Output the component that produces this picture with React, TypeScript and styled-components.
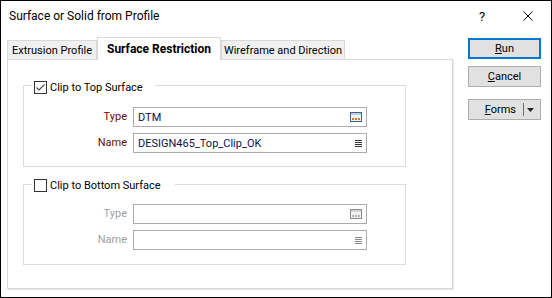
import React from 'react';
import styled, { createGlobalStyle } from 'styled-components';

const Global = createGlobalStyle`
  html, body { margin: 0; padding: 0; background: #ffffff; }
  body { font-family: Roboto, "Segoe UI", "Liberation Sans", Arial, sans-serif; }
  * { box-sizing: border-box; }
`;

const Window = styled.div`
  width: 552px;
  height: 298px;
  border: 1px solid #000000;
  background: #ffffff;
  display: flex;
  flex-direction: column;
  overflow: hidden;
`;

const TitleBar = styled.div`
  height: 30px;
  flex-shrink: 0;
  display: flex;
  align-items: center;
  padding-left: 8px;
`;

const Title = styled.div`
  flex: 1;
  font-size: 12px;
  color: #000000;
  white-space: nowrap;
`;

const CaptionButton = styled.div`
  width: 46px;
  height: 30px;
  display: flex;
  align-items: center;
  justify-content: center;
  font-size: 13px;
  color: #000000;
`;

const Body = styled.div`
  display: flex;
  gap: 15px;
  padding: 6px 0 0 6px;
`;

const TabArea = styled.div`
  width: 446px;
  display: flex;
  flex-direction: column;
`;

const TabStrip = styled.div`
  height: 22px;
  display: flex;
  align-items: flex-end;
`;

const Tab = styled.div<{ $active?: boolean; $w: number }>`
  width: ${p => p.$w}px;
  height: ${p => (p.$active ? 23 : 19)}px;
  margin-bottom: ${p => (p.$active ? -1 : 0)}px;
  position: relative;
  z-index: ${p => (p.$active ? 1 : 0)};
  border: 1px solid #d9d9d9;
  border-bottom: none;
  background: ${p => (p.$active ? '#ffffff' : '#f0f0f0')};
  font-size: ${p => (p.$active ? 12 : 11)}px;
  font-weight: ${p => (p.$active ? 700 : 400)};
  color: #000000;
  display: flex;
  align-items: center;
  justify-content: center;
  white-space: nowrap;
`;

const Panel = styled.div`
  height: 230px;
  border: 1px solid #d9d9d9;
  box-shadow: 1px 1px 0 #e6e6e6;
  background: #ffffff;
  padding: 18px 0 0 15px;
  display: flex;
  flex-direction: column;
`;

const Group = styled.fieldset<{ $pt: number; $pb: number }>`
  width: 383px;
  margin: 0;
  border: 1px solid #dcdcdc;
  padding: ${p => p.$pt}px 0 ${p => p.$pb}px 0;
  min-inline-size: auto;
  & + & {
    margin-top: 10px;
  }
`;

const Legend = styled.legend<{ $pr: number }>`
  margin-left: 8px;
  padding: 0 ${p => p.$pr}px 0 2px;
  height: 14px;
`;

const CheckLabel = styled.span`
  display: inline-flex;
  align-items: center;
  gap: 3px;
  height: 14px;
  font-size: 11px;
  color: #000000;
  white-space: nowrap;
`;

const CheckBox = styled.span`
  width: 13px;
  height: 13px;
  border: 1px solid #333333;
  background: #ffffff;
  display: inline-flex;
  align-items: center;
  justify-content: center;
`;

const Fields = styled.div`
  display: grid;
  grid-template-columns: 103px 234px;
  column-gap: 6px;
  row-gap: 6px;
`;

const FieldLabel = styled.div<{ $disabled?: boolean }>`
  text-align: right;
  font-size: 11px;
  line-height: 20px;
  color: ${p => (p.$disabled ? '#a0a0a0' : '#6a0a0a')};
`;

const Input = styled.div`
  height: 20px;
  border: 1px solid #ababab;
  background: #ffffff;
  display: flex;
  align-items: center;
  padding: 0 4px 0 4px;
  font-size: 11px;
  color: #101048;
`;

const InputText = styled.span`
  flex: 1;
  white-space: nowrap;
`;

const ButtonColumn = styled.div`
  width: 73px;
  display: flex;
  flex-direction: column;
  padding-top: 1px;
`;

const Button = styled.div<{ $default?: boolean; $mt?: number }>`
  height: 21px;
  margin-top: ${p => p.$mt ?? 0}px;
  border: ${p => (p.$default ? '2px solid #0078d7' : '1px solid #adadad')};
  background: #e1e1e1;
  font-size: 11px;
  color: #000000;
  display: flex;
  align-items: center;
  justify-content: center;
  white-space: nowrap;
`;

const SplitButton = styled(Button)`
  justify-content: flex-end;
  padding-right: 6px;
`;

const SplitDivider = styled.span`
  width: 1px;
  height: 13px;
  background: #6d6d6d;
  margin: 0 3px 0 7px;
`;

const CloseIcon = () => (
  <svg width="10" height="10" viewBox="0 0 10 10">
    <path d="M0.5 0.5 L9.5 9.5 M9.5 0.5 L0.5 9.5" stroke="#000" strokeWidth="1" fill="none" />
  </svg>
);

const CheckMark = () => (
  <svg width="11" height="11" viewBox="0 0 11 11">
    <polyline points="1.5,5.5 4,8 9.5,2.5" stroke="#4a4a4a" strokeWidth="1.1" fill="none" />
  </svg>
);

const BrowseIcon = ({ disabled }: { disabled?: boolean }) => {
  const edge = disabled ? '#8c8c8c' : '#41618a';
  const top = disabled ? '#d4d4d4' : '#bcd0e6';
  const fill = disabled ? '#f2f2f2' : '#eef3f9';
  const dot = disabled ? '#b4b4b4' : '#d07a2a';
  return (
    <svg width="12" height="10" viewBox="0 0 12 10">
      <rect x="0.5" y="0.5" width="11" height="9" fill={fill} stroke={edge} />
      <rect x="1" y="1" width="10" height="2" fill={top} />
      <rect x="2" y="6" width="2" height="2" fill={dot} />
      <rect x="5" y="6" width="2" height="2" fill={dot} />
      <rect x="8" y="6" width="2" height="2" fill={dot} />
    </svg>
  );
};

const MenuIcon = ({ disabled }: { disabled?: boolean }) => {
  const c = disabled ? '#8a8a8a' : '#333333';
  return (
    <svg width="7" height="7" viewBox="0 0 7 7">
      <path d="M0 0.5 H7 M0 2.5 H7 M0 4.5 H7 M0 6.5 H7" stroke={c} strokeWidth="1" />
    </svg>
  );
};

const DropArrow = () => (
  <svg width="7" height="4" viewBox="0 0 7 4">
    <polygon points="0,0 7,0 3.5,4" fill="#222" />
  </svg>
);

type SurfaceGroupProps = {
  title: string;
  checked: boolean;
  typeValue: string;
  nameValue: string;
  pt: number;
  pb: number;
  pr: number;
};

const SurfaceGroup = ({ title, checked, typeValue, nameValue, pt, pb, pr }: SurfaceGroupProps) => (
  <Group $pt={pt} $pb={pb}>
    <Legend $pr={pr}>
      <CheckLabel>
        <CheckBox>{checked && <CheckMark />}</CheckBox>
        {title}
      </CheckLabel>
    </Legend>
    <Fields>
      <FieldLabel $disabled={!checked}>Type</FieldLabel>
      <Input>
        <InputText>{typeValue}</InputText>
        <BrowseIcon disabled={!checked} />
      </Input>
      <FieldLabel $disabled={!checked}>Name</FieldLabel>
      <Input>
        <InputText>{nameValue}</InputText>
        <MenuIcon disabled={!checked} />
      </Input>
    </Fields>
  </Group>
);

export default function App() {
  return (
    <>
      <Global />
      <Window>
        <TitleBar>
          <Title>Surface or Solid from Profile</Title>
          <CaptionButton>?</CaptionButton>
          <CaptionButton>
            <CloseIcon />
          </CaptionButton>
        </TitleBar>
        <Body>
          <TabArea>
            <TabStrip>
              <Tab $w={90}>Extrusion Profile</Tab>
              <Tab $w={124} $active>
                Surface Restriction
              </Tab>
              <Tab $w={124}>Wireframe and Direction</Tab>
            </TabStrip>
            <Panel>
              <SurfaceGroup
                title="Clip to Top Surface"
                checked
                typeValue="DTM"
                nameValue="DESIGN465_Top_Clip_OK"
                pt={15}
                pb={13}
                pr={12}
              />
              <SurfaceGroup
                title="Clip to Bottom Surface"
                checked={false}
                typeValue=""
                nameValue=""
                pt={13}
                pb={14}
                pr={14}
              />
            </Panel>
          </TabArea>
          <ButtonColumn>
            <Button $default>
              <u>R</u>un
            </Button>
            <Button $mt={7}>
              <u>C</u>ancel
            </Button>
            <SplitButton $mt={12}>
              <span>
                <u>F</u>orms
              </span>
              <SplitDivider />
              <DropArrow />
            </SplitButton>
          </ButtonColumn>
        </Body>
      </Window>
    </>
  );
}
